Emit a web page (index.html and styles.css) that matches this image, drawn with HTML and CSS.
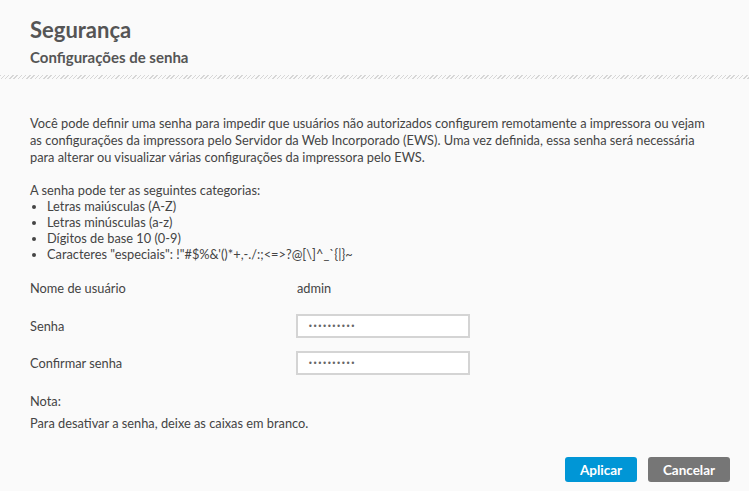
FILE: index.html
```html
<!DOCTYPE html>
<html lang="pt">
<head>
<meta charset="utf-8">
<link rel="stylesheet" href="styles.css">
</head>
<body>
<div class="page">
  <header class="head">
    <h1 class="title">Segurança</h1>
    <h2 class="subtitle">Configurações de senha</h2>
  </header>
  <div class="hatch"></div>
  <main class="content">
    <p class="intro">Você pode definir uma senha para impedir que usuários não autorizados configurem remotamente a impressora ou vejam as configurações da impressora pelo Servidor da Web Incorporado (EWS). Uma vez definida, essa senha será necessária para alterar ou visualizar várias configurações da impressora pelo EWS.</p>
    <div class="cats">
      <p class="cats-title">A senha pode ter as seguintes categorias:</p>
      <ul class="cat-list">
        <li>Letras maiúsculas (A-Z)</li>
        <li>Letras minúsculas (a-z)</li>
        <li>Dígitos de base 10 (0-9)</li>
        <li>Caracteres "especiais": !"#$%&amp;'()*+,-./:;&lt;=&gt;?@[\]^_`{|}~</li>
      </ul>
    </div>
    <div class="form">
      <div class="row row-user">
        <span class="label">Nome de usuário</span>
        <span class="value">admin</span>
      </div>
      <div class="row">
        <span class="label">Senha</span>
        <input class="field" type="password" value="1234567890">
      </div>
      <div class="row">
        <span class="label">Confirmar senha</span>
        <input class="field" type="password" value="1234567890">
      </div>
    </div>
    <div class="note">
      <p class="note-title">Nota:</p>
      <p class="note-text">Para desativar a senha, deixe as caixas em branco.</p>
    </div>
    <div class="actions">
      <button class="btn btn-primary">Aplicar</button>
      <button class="btn btn-secondary">Cancelar</button>
    </div>
  </main>
</div>
</body>
</html>
```
FILE: styles.css
```css
* { box-sizing: border-box; }
html, body { margin: 0; padding: 0; }
body {
  background: #fafafa;
  font-family: "Lato", "Noto Sans", sans-serif;
  color: #444;
  width: 749px;
  height: 491px;
  overflow: hidden;
}
.head {
  padding: 17px 30px 0;
}
.title {
  margin: 0;
  font-size: 22px;
  font-weight: 700;
  color: #555;
  line-height: 26px;
}
.subtitle {
  margin: 5px 0 0;
  font-size: 15px;
  font-weight: 700;
  color: #555;
  line-height: 18px;
}
.hatch {
  margin-top: 9px;
  height: 4px;
  background: repeating-linear-gradient(135deg, #d6d6d6 0 1px, #fafafa 1px 3px);
}
.content {
  padding: 36px 30px 0;
  font-size: 12.8px;
  color: #444;
}
.intro {
  margin: 0;
  line-height: 17px;
  width: 688px;
}
.cats { margin-top: 16px; }
.cats-title { margin: 0; line-height: 16px; }
.cat-list {
  margin: 0;
  padding: 0 0 0 17px;
  line-height: 16px;
}
.form {
  margin-top: 18px;
  display: flex;
  flex-direction: column;
  gap: 14px;
}
.row {
  display: grid;
  grid-template-columns: 266px 174px;
  align-items: center;
  height: 23px;
}
.row-user { height: 16px; margin-bottom: 4px; }
.value { padding-left: 1px; }
.field {
  width: 174px;
  height: 24px;
  border: 2px solid #d4d4d4;
  background: #fff;
  font-size: 8px;
  padding: 0 10px;
  color: #666;
  font-family: "DejaVu Sans", sans-serif;
}
.note { margin-top: 16px; line-height: 22px; }
.note p { margin: 0; }
.actions {
  margin-top: 23px;
  display: flex;
  justify-content: flex-end;
  gap: 11px;
  margin-right: -11px;
}
.btn {
  height: 25px;
  border: none;
  border-radius: 3px;
  color: #fff;
  font-family: "Lato", sans-serif;
  font-weight: 700;
  font-size: 13.5px;
  padding: 0;
}
.btn-primary { background: #0096d6; width: 72px; }
.btn-secondary { background: #767676; width: 82px; }
```
